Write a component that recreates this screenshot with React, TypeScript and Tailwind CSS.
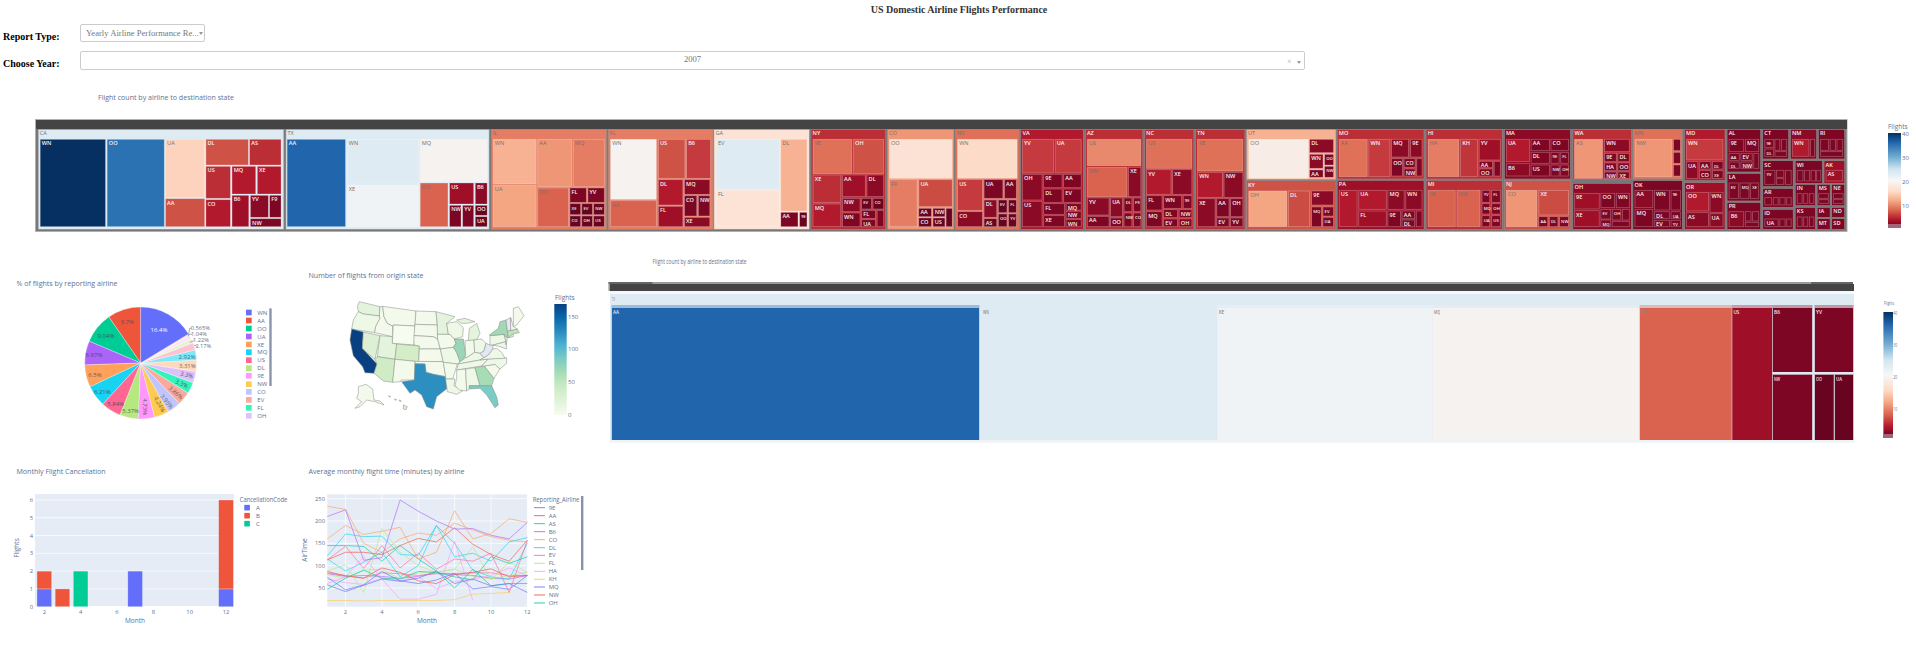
import React from "react";

const FS = '"Open Sans", "Liberation Sans", sans-serif';
const INK = "#5f7190";

const A = "#053061", B = "#2166ac", B2 = "#2b72b3", L = "#deebf3", W = "#f0f3f5", P = "#f6f2ef", K = "#fdd3bd", K2 = "#fce2d4",
  S1 = "#f6b292", S2 = "#f4a582", S3 = "#ef9676", S4 = "#e47d63", S5 = "#df7158", S6 = "#d9634e",
  R1 = "#cf5246", R2 = "#c43a3e", R3 = "#bb2e36", R4 = "#b2192c", R5 = "#a00f28", D1 = "#8b0a25", D2 = "#7c0623", D3 = "#680320";

type Kid = [string, number, number, number, number, string?];
type St = [number, string, number, number, number, number, string, Kid[]];

const states: St[] = [
  [2, "CA", 20, 43, 622, 343, L, [["WN", 25, 73, 185, 335, A], ["OO", 189, 73, 329, 335, B2], ["UA", 332, 73, 428, 247, K], ["AA", 332, 251, 428, 335, R1], ["DL", 431, 73, 535, 150, R1], ["AS", 538, 73, 615, 150, R3], ["US", 431, 154, 491, 250, R3], ["MQ", 495, 154, 553, 237, R4], ["XE", 557, 154, 615, 237, R4], ["CO", 431, 254, 491, 335, R4], ["B6", 495, 241, 536, 335, R5], ["YV", 540, 241, 584, 307, D1], ["F9", 587, 241, 615, 307, D2], ["NW", 540, 311, 615, 335, D2]]],
  [2, "TX", 627, 43, 1125, 343, L, [["AA", 630, 73, 773, 335, B], ["WN", 777, 73, 952, 207, L], ["XE", 777, 211, 952, 335, W], ["MQ", 956, 73, 1120, 200, P], ["OO", 956, 204, 1024, 335, S6], ["US", 1028, 204, 1087, 267, R5], ["B6", 1091, 204, 1120, 267, D1], ["NW", 1028, 271, 1056, 335, D2], ["YV", 1060, 271, 1087, 335, D2], ["OO", 1091, 271, 1120, 301, D3], ["UA", 1091, 305, 1120, 335, D3]]],
  [2, "IL", 1130, 43, 1413, 343, S4, [["WN", 1135, 73, 1240, 207, S1], ["UA", 1135, 211, 1240, 335, S2], ["AA", 1244, 73, 1327, 215, S3], ["MQ", 1331, 73, 1407, 215, S4], ["OO", 1244, 219, 1319, 335, S6], ["FL", 1323, 219, 1363, 262, D2], ["YV", 1367, 219, 1407, 262, D2], ["XE", 1323, 266, 1349, 299, D3], ["EV", 1352, 266, 1378, 299, D3], ["NW", 1381, 266, 1407, 299, D3], ["CO", 1323, 303, 1349, 335, D3], ["OH", 1352, 303, 1378, 335, D3], ["US", 1381, 303, 1407, 335, D3]]],
  [3, "FL", -127, 43, 130, 343, S4, [["WN", -121, 73, -9, 253, P], ["AA", -121, 257, -9, 335, S6], ["US", -4, 73, 61, 190, R1], ["B6", 65, 73, 124, 190, R2], ["DL", -4, 194, 56, 270, R4], ["MQ", 60, 194, 122, 238, D1], ["CO", 60, 242, 90, 303, D2], ["NW", 94, 242, 122, 303, D2], ["FL", -4, 274, 56, 335, R5], ["XE", 60, 307, 122, 335, D1]]],
  [3, "GA", 132, 43, 366, 343, "#fde3d6", [["EV", 138, 73, 293, 222, L], ["FL", 138, 226, 293, 333, "#fde3d6"], ["DL", 296, 73, 360, 288, S1], ["AA", 296, 292, 338, 335, D2], ["9E", 342, 292, 360, 335, D3]]],
  [3, "NY", 370, 43, 553, 343, R3, [["9E", 375, 73, 470, 176, S5], ["OH", 474, 73, 548, 176, R1], ["XE", 375, 180, 443, 262, R3], ["MQ", 375, 267, 443, 335, R4], ["AA", 447, 180, 503, 245, R5], ["DL", 507, 180, 548, 245, D1], ["NW", 447, 250, 490, 290, D1], ["EV", 494, 250, 518, 282, D3], ["CO", 522, 250, 548, 282, D3], ["WN", 447, 294, 490, 335, D2], ["FL", 494, 286, 528, 310, D2], ["UA", 494, 314, 528, 335, D2], ["US", 532, 286, 548, 335, D2]]],
  [3, "CO", 557, 43, 720, 343, S3, [["OO", 562, 73, 716, 190, K2], ["F9", 562, 194, 630, 335, S4], ["UA", 634, 194, 716, 275, "#cb4c42"], ["AA", 634, 280, 665, 305, D3], ["NW", 669, 280, 698, 305, D3], ["", 701, 280, 716, 335, D3], ["CO", 634, 309, 665, 335, D3], ["US", 669, 309, 698, 335, D3]]],
  [3, "NV", 724, 43, 880, 343, S5, [["WN", 729, 73, 875, 190, "#fcdcc9"], ["US", 729, 194, 790, 286, R2], ["UA", 794, 194, 840, 250, D2], ["AA", 844, 194, 873, 250, D2], ["CO", 729, 290, 790, 335, D1], ["DL", 794, 255, 825, 307, D1], ["EV", 829, 255, 850, 293, D3], ["FL", 854, 255, 873, 293, D3], ["AS", 794, 311, 825, 335, D3], ["OO", 829, 297, 850, 335, D3], ["YV", 854, 297, 873, 335, D3]]],
  [3, "VA", 884, 43, 1037, 343, R4, [["YV", 888, 73, 964, 174, R2], ["UA", 968, 73, 1032, 174, R2], ["OH", 888, 178, 936, 255, D1], ["9E", 940, 178, 985, 218], ["AA", 989, 178, 1032, 218], ["DL", 940, 222, 985, 262], ["EV", 989, 222, 1032, 262], ["US", 888, 259, 936, 335, D1], ["FL", 940, 266, 991, 298], ["MQ", 995, 266, 1032, 285], ["NW", 995, 289, 1032, 310], ["XE", 940, 302, 991, 335], ["WN", 995, 314, 1032, 335]]],
  [3, "AZ", 1042, 43, 1183, 343, R3, [["US", 1047, 73, 1178, 152, "#e8886c"], ["WN", 1047, 157, 1144, 245, S6], ["XE", 1148, 157, 1178, 245, D1], ["YV", 1047, 249, 1100, 300, D1], ["UA", 1104, 249, 1133, 305, D1], ["DL", 1137, 249, 1156, 290], ["F9", 1160, 249, 1178, 290], ["AA", 1047, 304, 1100, 335], ["OO", 1104, 309, 1133, 335], ["NW", 1137, 294, 1156, 335], ["CO", 1160, 294, 1178, 335]]],
  [3, "NC", 1187, 43, 1308, 343, R3, [["US", 1192, 73, 1303, 160, S5], ["YV", 1192, 164, 1252, 238, R4], ["XE", 1256, 164, 1303, 238, D1], ["FL", 1192, 242, 1230, 285], ["WN", 1234, 242, 1278, 280], ["9E", 1282, 242, 1303, 280], ["MQ", 1192, 290, 1230, 335], ["DL", 1234, 284, 1268, 308], ["NW", 1272, 284, 1303, 308], ["EV", 1234, 312, 1268, 335], ["OH", 1272, 312, 1303, 335]]],
  [3, "TN", 1312, 43, 1433, 343, R3, [["9E", 1317, 73, 1428, 168, S5], ["WN", 1317, 172, 1378, 247, R4], ["NW", 1382, 172, 1428, 247, D1], ["XE", 1317, 251, 1360, 335, D1], ["AA", 1364, 251, 1394, 305], ["OH", 1398, 251, 1428, 305], ["EV", 1364, 309, 1394, 335], ["YV", 1398, 309, 1428, 335]]],
  [4, "UT", -83, 43, 138, 194, S1, [["OO", -77, 73, 70, 190, "#f7ece6"], ["DL", 73, 73, 132, 113, D1], ["WN", 73, 118, 106, 160, D1], ["OO", 110, 118, 132, 150], ["AA", 73, 165, 106, 187], ["NW", 110, 154, 132, 187]]],
  [4, "KY", -83, 197, 138, 343, R1, [["OH", -77, 228, 17, 335, S2], ["DL", 21, 228, 73, 335, "#cb4c42"], ["9E", 78, 228, 132, 270, D1], ["MQ", 78, 276, 102, 335], ["EV", 106, 276, 132, 303], ["UA", 106, 307, 132, 335]]],
  [4, "MO", 141, 43, 355, 192, R3, [["AA", 146, 73, 215, 185, S5], ["WN", 219, 73, 271, 185, R2], ["MQ", 275, 73, 317, 126, D1], ["9E", 322, 73, 350, 126, D1], ["OO", 275, 131, 302, 183], ["CO", 306, 131, 333, 157], ["NW", 306, 162, 333, 183], ["", 337, 131, 350, 183]]],
  [4, "PA", 141, 196, 355, 343, R5, [["US", 146, 226, 190, 335, R4], ["UA", 194, 226, 262, 283, R4], ["MQ", 266, 226, 306, 283, D1], ["WN", 310, 226, 350, 283, D1], ["FL", 194, 288, 262, 335, R5], ["9E", 266, 288, 297, 335], ["AA", 301, 288, 332, 311], ["DL", 301, 315, 332, 335], ["", 336, 288, 350, 335]]],
  [4, "HI", 360, 43, 548, 192, R3, [["HA", 365, 73, 441, 185, S4], ["KH", 445, 73, 487, 185, "#bf3539"], ["YV", 491, 73, 543, 135, R5], ["AA", 491, 139, 524, 158], ["OO", 491, 162, 524, 183], ["", 528, 139, 543, 183]]],
  [4, "MI", 360, 196, 548, 343, R3, [["9E", 365, 226, 432, 335, S6], ["NW", 436, 226, 493, 335, S6], ["YV", 498, 226, 517, 262], ["FL", 522, 226, 543, 262], ["MQ", 498, 266, 517, 297], ["OH", 522, 266, 543, 297], ["UA", 498, 302, 517, 335], ["US", 522, 302, 543, 335]]],
  [4, "MA", 553, 43, 716, 192, D1, [["UA", 558, 73, 615, 140, R4], ["AA", 619, 73, 664, 107], ["CO", 668, 73, 711, 107], ["DL", 619, 112, 664, 145], ["9E", 668, 112, 688, 145], ["FL", 692, 112, 711, 145], ["B6", 558, 146, 615, 183, D1], ["US", 619, 150, 664, 183], ["NW", 668, 150, 688, 183], ["OH", 692, 150, 711, 183]]],
  [4, "NJ", 553, 196, 717, 343, R1, [["CO", 558, 226, 633, 335, S3], ["XE", 638, 226, 711, 300, "#cb4c42"], ["AA", 638, 305, 660, 335], ["DL", 664, 305, 685, 335], ["NW", 689, 305, 711, 335]]],
  [4, "WA", 722, 43, 866, 192, R3, [["AS", 726, 73, 795, 190, S3], ["WN", 800, 73, 861, 110, D1], ["9E", 800, 115, 829, 140], ["DL", 833, 115, 861, 140], ["HA", 800, 144, 829, 167], ["OO", 833, 144, 861, 167], ["NW", 800, 171, 829, 190], ["XE", 833, 171, 861, 190]]],
  [4, "OH", 722, 205, 866, 343, D1, [["9E", 726, 235, 787, 282, R5], ["OO", 791, 235, 825, 278], ["WN", 829, 235, 861, 278], ["XE", 726, 287, 787, 335, R5], ["EV", 791, 283, 815, 312], ["OH", 819, 283, 840, 315], ["US", 844, 283, 861, 315], ["MQ", 791, 315, 815, 335], ["", 819, 319, 861, 335]]],
  [4, "MN", 870, 43, 992, 192, S5, [["NW", 875, 73, 966, 185, S3], ["9E", 970, 73, 987, 107], ["FL", 970, 112, 987, 145], ["UA", 970, 150, 987, 183]]],
  [4, "OK", 870, 197, 992, 343, D2, [["AA", 875, 226, 919, 278, D1], ["WN", 923, 226, 960, 285], ["9E", 964, 226, 987, 285], ["MQ", 875, 283, 919, 335], ["DL", 923, 290, 960, 311], ["UA", 964, 290, 987, 311], ["EV", 923, 316, 960, 335], ["YV", 964, 316, 987, 335]]],
  [4, "MD", 997, 43, 1097, 197, R4, [["WN", 1002, 73, 1092, 135, R2], ["UA", 1002, 140, 1030, 190, D1], ["AA", 1034, 140, 1062, 162], ["DL", 1066, 140, 1092, 162], ["CO", 1034, 167, 1062, 190], ["XE", 1066, 167, 1092, 190]]],
  [4, "OR", 997, 203, 1097, 343, R5, [["OO", 1002, 232, 1056, 288, R4], ["WN", 1060, 232, 1092, 292, D1], ["AS", 1002, 293, 1056, 335, D1], ["UA", 1060, 296, 1092, 335, D1]]],
  [4, "AL", 1102, 43, 1185, 171, D2, [["9E", 1107, 73, 1143, 110], ["MQ", 1147, 73, 1180, 110], ["AA", 1107, 115, 1132, 136], ["EV", 1136, 115, 1164, 136], ["", 1168, 115, 1180, 160], ["DL", 1107, 141, 1132, 160], ["NW", 1136, 141, 1164, 160]]],
  [4, "LA", 1102, 175, 1185, 258, D2, [["EV", 1107, 204, 1130, 250], ["MQ", 1134, 204, 1156, 250], ["XE", 1160, 204, 1180, 250]]],
  [4, "PR", 1102, 262, 1185, 343, D2, [["B6", 1107, 290, 1143, 335, D1], ["", 1147, 290, 1161, 318], ["", 1165, 290, 1180, 318], ["", 1147, 322, 1180, 335]]],
  [4, "CT", 1190, 43, 1254, 132, D2, [["9E", 1195, 73, 1217, 98], ["DL", 1195, 102, 1217, 124], ["", 1220, 73, 1232, 106], ["", 1236, 73, 1249, 106], ["", 1220, 110, 1249, 124]]],
  [4, "SC", 1190, 137, 1265, 215, D2, [["YV", 1195, 166, 1220, 208], ["", 1224, 166, 1242, 187], ["", 1246, 166, 1260, 208], ["", 1224, 191, 1242, 208]]],
  [4, "AR", 1190, 220, 1265, 277, D2, [["", 1195, 248, 1212, 270], ["", 1216, 248, 1228, 270], ["", 1232, 248, 1245, 270], ["", 1249, 248, 1260, 270]]],
  [4, "ID", 1190, 283, 1265, 343, D2, [["UA", 1195, 312, 1228, 335], ["", 1232, 312, 1245, 335], ["", 1249, 312, 1260, 335]]],
  [4, "NM", 1258, 43, 1323, 132, D1, [["WN", 1263, 73, 1304, 124, R4], ["", 1308, 73, 1318, 124]]],
  [4, "RI", 1327, 43, 1392, 132, D2, [["", 1332, 73, 1352, 106], ["", 1356, 73, 1369, 106], ["", 1373, 73, 1387, 106], ["", 1332, 110, 1387, 124]]],
  [4, "WI", 1270, 137, 1337, 205, D2, [["", 1275, 166, 1289, 198], ["", 1293, 166, 1305, 198], ["", 1309, 166, 1320, 198], ["", 1323, 166, 1333, 198]]],
  [4, "AK", 1341, 137, 1392, 205, R5, [["AS", 1346, 166, 1387, 198, R5]]],
  [4, "IN", 1270, 208, 1320, 272, D2, [["", 1275, 236, 1287, 265], ["", 1291, 236, 1301, 265], ["", 1305, 236, 1316, 265]]],
  [4, "MS", 1324, 208, 1356, 272, D2, [["", 1328, 236, 1352, 250], ["", 1328, 254, 1352, 265]]],
  [4, "NE", 1360, 208, 1392, 272, D2, [["", 1364, 236, 1388, 250], ["", 1364, 254, 1388, 265]]],
  [4, "KS", 1270, 277, 1320, 343, D2, [["", 1275, 306, 1287, 335], ["", 1291, 306, 1301, 335], ["", 1305, 306, 1316, 335]]],
  [4, "IA", 1324, 277, 1356, 307, D2, []],
  [4, "ND", 1360, 277, 1392, 307, D2, []],
  [4, "MT", 1324, 311, 1356, 343, D2, []],
  [4, "SD", 1360, 311, 1392, 343, D2, []],
];

const mapX = (z: number, v: number) => (z === 2 ? 30 + v / 2.45 : z === 3 ? 660 + v / 2.45 : 1280 + v / 2.465);
const mapY = (v: number) => 115 + v / 3;

function isLight(c: string) {
  const r = parseInt(c.slice(1, 3), 16), g = parseInt(c.slice(3, 5), 16), b = parseInt(c.slice(5, 7), 16);
  return 0.3 * r + 0.59 * g + 0.11 * b > 125;
}

function Tile({ x0, y0, x1, y1, fill, label, stroke, sw = 0.8, fs = 5.6 }: { x0: number; y0: number; x1: number; y1: number; fill: string; label: string; stroke: string; sw?: number; fs?: number }) {
  return (
    <g>
      <rect x={x0} y={y0} width={x1 - x0} height={y1 - y0} fill={fill} stroke={stroke} strokeWidth={sw} />
      {label && (
        <text x={x0 + 1.6} y={y0 + 6} fontSize={fs} fontFamily={FS} fontWeight={isLight(fill) ? 400 : 600} fill={isLight(fill) ? "#77706c" : "#f5f0f0"}>
          {label}
        </text>
      )}
    </g>
  );
}

function BigTreemap() {
  return (
    <svg viewBox="0 85 1916 165" className="block w-[1916px] h-[165px]">
      <text x={98} y={99.5} fontSize={7} fontFamily={FS} fill={INK} textLength={136} lengthAdjust="spacingAndGlyphs">Flight count by airline to destination state</text>
      <rect x={35.5} y={119.5} width={1811.5} height={112} fill="#777777" stroke="#b0b0b0" strokeWidth={1} />
      <rect x={36} y={120} width={1811} height={9} fill="#444444" />
      {states.map(([z, l, a, b, c, d, col, kids]) => (
        <g key={l}>
          <Tile x0={mapX(z, a)} y0={mapY(b)} x1={mapX(z, c)} y1={mapY(d)} fill={col} label={l} stroke="#8f8f8f" sw={0.6} />
          {kids.map(([kl, p, q, r, s, kc], i) => {
            const wpx = (r - p) / 2.45;
            return (
              <Tile key={i} x0={mapX(z, p)} y0={mapY(q)} x1={mapX(z, r)} y1={mapY(s)} fill={kc ?? D2} label={wpx > 7 ? kl : ""} fs={wpx < 11 ? 4.2 : 5.6} stroke="rgba(255,255,255,0.3)" />
            );
          })}
        </g>
      ))}
      <ColorBar x={1888} y={133} w={13} h={95} />
      <text x={1888} y={129} fontSize={6.5} fontFamily={FS} fill={INK}>Flights</text>
      {[["40", 136], ["30", 160], ["20", 184], ["10", 208]].map(([t, y]) => (
        <text key={t} x={1902} y={Number(y)} fontSize={6} fontFamily={FS} fill={INK}>{t}</text>
      ))}
    </svg>
  );
}

function ColorBar({ x, y, w, h }: { x: number; y: number; w: number; h: number }) {
  const id = `rb${Math.round(x)}`;
  return (
    <g>
      <defs>
        <linearGradient id={id} x1="0" y1="0" x2="0" y2="1">
          <stop offset="0" stopColor="#053061" />
          <stop offset="0.1" stopColor="#2166ac" />
          <stop offset="0.25" stopColor="#6fabd0" />
          <stop offset="0.38" stopColor="#d1e5f0" />
          <stop offset="0.5" stopColor="#f7f7f7" />
          <stop offset="0.62" stopColor="#fddbc7" />
          <stop offset="0.72" stopColor="#f4a582" />
          <stop offset="0.82" stopColor="#d6604d" />
          <stop offset="0.91" stopColor="#b2182b" />
          <stop offset="0.97" stopColor="#7c0623" />
          <stop offset="1" stopColor="#67001f" />
        </linearGradient>
      </defs>
      <rect x={x} y={y} width={w} height={h} fill={`url(#${id})`} />
      <rect x={x} y={y + h - 4} width={w} height={4} fill="#a0667a" />
    </g>
  );
}

const pieCols: [string, number, string][] = [
  ["AA", 9.7, "#ef553b"], ["OO", 9.04, "#00cc96"], ["UA", 6.97, "#ab63fa"], ["XE", 6.5, "#ffa15a"], ["MQ", 6.21, "#19d3f3"], ["US", 5.84, "#ff6692"], ["DL", 5.37, "#b6e880"], ["9E", 4.73, "#ff97ff"], ["NW", 4.24, "#fecb52"], ["CO", 3.95, "#c1c5fd"], ["EV", 3.86, "#f9aa9d"], ["FL", 3.3, "#33f5bc"], ["OH", 3.3, "#ddc1fd"], ["", 3.31, "#ffd9bd"], ["", 2.92, "#7de9f8"], ["", 2.17, "#ffc2d3"], ["", 1.22, "#e2f5cf"], ["", 1.04, "#ffe0ff"], ["", 0.565, "#ffeaba"], ["WN", 16.4, "#636efa"],
];

function Pie() {
  const cx = 140.7, cy = 363, r = 56;
  const tot = pieCols.reduce((s, p) => s + p[1], 0);
  let ang = 0;
  const paths = pieCols.map(([n, v, c]) => {
    const a0 = ang;
    const a1 = ang - (v / tot) * Math.PI * 2;
    ang = a1;
    const x0 = cx + r * Math.sin(a0), y0 = cy - r * Math.cos(a0), x1 = cx + r * Math.sin(a1), y1 = cy - r * Math.cos(a1);
    const big = a0 - a1 > Math.PI ? 1 : 0;
    return <path key={n + v} d={`M${cx} ${cy}L${x0} ${y0}A${r} ${r} 0 ${big} 0 ${x1} ${y1}Z`} fill={c} stroke="#fff" strokeWidth={0.3} />;
  });
  const labels: [string, number, number, number, string][] = [
    ["16.4%", 477, 195, 0, "#fff"], ["9.7%", 382, 171, 0, "#6a4a50"], ["9.04%", 318, 213, 0, "#35635c"], ["6.97%", 282, 270, 0, "#54477a"], ["6.5%", 285, 330, 0, "#6a5a50"], ["6.21%", 307, 380, 0, "#38606e"], ["5.84%", 347, 416, 0, "#6a4a60"], ["5.37%", 392, 438, 0, "#5a6a50"], ["4.73%", 435, 425, 90, "#665a70"], ["4.24%", 478, 418, 60, "#665f50"], ["3.95%", 500, 410, 50, "#5f6480"], ["3.86%", 527, 383, 40, "#70605c"], ["3.3%", 545, 357, 25, "#4c6a64"], ["3.3%", 560, 330, 15, "#665f7a"], ["3.31%", 562, 302, 0, "#706a60"], ["2.92%", 561, 277, 0, "#4c6a74"],
  ];
  const out: [string, number, number][] = [["0.565%", 601, 189], ["1.04%", 597, 207], ["1.22%", 603, 226], ["2.17%", 610, 243]];
  const legend = ["WN", "AA", "OO", "UA", "XE", "MQ", "US", "DL", "9E", "NW", "CO", "EV", "FL", "OH"];
  const legCols = ["#636efa", "#ef553b", "#00cc96", "#ab63fa", "#ffa15a", "#19d3f3", "#ff6692", "#b6e880", "#ff97ff", "#fecb52", "#c1c5fd", "#f9aa9d", "#33f5bc", "#ddc1fd"];
  const ys = [143, 167, 191, 215, 239, 262, 286, 310, 333, 358, 381, 405, 429, 453];
  return (
    <svg viewBox="0 250 300 210" className="block w-[300px] h-[210px]">
      <text x={16.5} y={286} fontSize={7.2} fontFamily={FS} fill={INK} textLength={101} lengthAdjust="spacingAndGlyphs">% of flights by reporting airline</text>
      {paths}
      <g transform="translate(0 265) scale(0.33333)" fontFamily={FS}>
        {labels.map(([t, x, y, rot, c]) => (
          <text key={t + x} x={x} y={y + 6} fontSize={18} textAnchor="middle" fill={c} transform={rot ? `rotate(${rot} ${x} ${y})` : undefined}>{t}</text>
        ))}
        <path d="M565 214L569 190H574M565 209L571 208H576M570 232L582 227M582 240L590 243" fill="none" stroke="#8d93a5" strokeWidth={2.4} />
        {out.map(([t, x, y]) => (
          <text key={t} x={x} y={y + 6} fontSize={17} textAnchor="middle" fill={INK}>{t}</text>
        ))}
        {legend.map((n, i) => (
          <g key={n}>
            <rect x={738} y={ys[i] - 9} width={17} height={17} fill={legCols[i]} />
            <text x={772} y={ys[i] + 6} fontSize={18} fill={INK}>{n}</text>
          </g>
        ))}
        <rect x={808} y={130} width={7} height={233} fill="#8892ab" />
      </g>
    </svg>
  );
}

const G0 = "#f3faec", G1 = "#eef8e6", G2 = "#e4f4dc", G3 = "#dcf1d4";
const mapStates: [string, string][] = [
  ["M178 110L240 125L238 153L190 147L175 140L172 125Z", G2],
  ["M175 140L190 147L238 153L240 160L227 185L224 203L155 192L160 165Z", G1],
  ["M155 192L190 201L187 250L231 297L222 325L195 323L188 305L160 272L150 225Z", "#084081"],
  ["M190 201L240 212L225 283L221 280L187 250Z", G3],
  ["M248 124L252 155L262 175L278 183L277 215L224 203L227 185L240 160L238 153L240 125Z", G0],
  ["M248 124L348 138L345 183L280 180L278 183L262 175L252 155Z", G0],
  ["M280 180L345 183L342 240L277 235Z", "#f7fcf0"],
  ["M240 212L277 215L277 235L290 237L285 283L232 275Z", G2],
  ["M232 275L285 283L278 352L250 348L222 325L231 297L225 283Z", "#cfecc4"],
  ["M290 237L358 243L356 290L285 283Z", "#d4edc6"],
  ["M285 283L345 289L343 345L303 345L302 350L278 352Z", G0],
  ["M348 138L408 140L412 180L345 178Z", G0],
  ["M345 178L412 180L413 222L400 215L342 212Z", G0],
  ["M342 212L400 215L413 222L421 252L358 252L358 243L342 240Z", G0],
  ["M358 252L421 252L430 290L356 290Z", G0],
  ["M345 289L430 290L437 335L400 328L378 322L375 297L345 296Z", G0],
  ["M345 296L375 297L378 322L400 328L437 335L442 370L410 395L400 432L380 425L365 390L345 375L330 385L305 350L343 345Z", "#2d8fbf"],
  ["M408 140L465 155L440 175L445 208L412 208L412 180Z", G2],
  ["M412 208L450 208L463 222L468 235L460 247L421 252L413 222Z", G0],
  ["M421 252L460 247L470 262L480 290L472 297L430 292Z", G1],
  ["M430 292L472 297L458 342L437 342L437 335Z", G0],
  ["M437 342L465 342L462 362L488 378L470 388L442 380Z", G1],
  ["M440 175L470 170L490 188L488 215L463 222L450 208L445 208Z", G1],
  ["M463 222L490 222L497 270L485 290L480 290L470 262L460 247L468 235Z", "#9ad5b8"],
  ["M508 190L530 175L540 205L530 225L505 227Z", G2],
  ["M470 165L495 160L525 170L500 175L485 175Z", G2],
  ["M495 227L522 225L524 262L505 275L495 280L497 270Z", G0],
  ["M522 225L545 222L558 235L552 258L540 265L524 262Z", G1],
  ["M480 290L495 280L505 275L524 262L540 265L552 278L540 285L475 297Z", G1],
  ["M475 297L540 285L565 282L545 303L470 315Z", G1],
  ["M470 315L497 312L500 378L478 375L465 362L470 340Z", G0],
  ["M497 312L525 308L540 362L508 362L508 372L500 378Z", G1],
  ["M525 308L553 303L582 340L575 362L540 362Z", "#a8dcb5"],
  ["M508 362L540 362L575 362L590 395L595 420L585 428L560 390L540 370L510 372L508 372Z", "#7bccc4"],
  ["M553 303L585 298L600 312L582 340Z", G0],
  ["M545 303L565 282L620 278L620 295L600 312L585 298L553 303Z", G1],
  ["M540 285L552 278L565 270L578 252L590 250L605 262L615 280L565 282Z", G1],
  ["M552 258L558 235L570 240L580 240L578 252L565 270L552 278L540 265Z", "#e4e7f4"],
  ["M570 212L612 208L618 230L580 240L570 240Z", G1],
  ["M568 210L595 190L600 170L618 165L622 198L625 218L615 215L612 208L570 212Z", "#a2d9b4"],
  ["M580 240L618 230L620 252L600 245Z", G1],
  ["M612 208L622 220L618 240L618 230Z", G2],
  ["M625 210L640 206L640 215L627 218Z", G2],
  ["M622 198L652 192L658 203L640 206L625 218Z", "#bce4bd"],
  ["M618 165L632 158L632 196L622 198Z", "#e4e7f4"],
  ["M632 158L640 185L652 192L632 196Z", G0],
  ["M640 130L655 125L672 152L650 180L640 185Z", G0],
  ["M175 365L198 358L218 372L222 405L240 408L252 420L225 410L200 405L180 425L165 430L185 410L170 400L175 385Z", G0],
  ["M265 392L272 395L268 396ZM283 402L290 404L286 406ZM297 405L304 408L300 410ZM310 420L322 425L318 434L310 432Z", G3],
];

function UsMap() {
  return (
    <svg viewBox="300 250 300 210" className="block w-[300px] h-[210px]">
      <defs>
        <linearGradient id="gnbu" x1="0" y1="1" x2="0" y2="0">
          <stop offset="0" stopColor="#f7fcf0" />
          <stop offset="0.125" stopColor="#e0f3db" />
          <stop offset="0.25" stopColor="#ccebc5" />
          <stop offset="0.375" stopColor="#a8ddb5" />
          <stop offset="0.5" stopColor="#7bccc4" />
          <stop offset="0.625" stopColor="#4eb3d3" />
          <stop offset="0.75" stopColor="#2b8cbe" />
          <stop offset="0.875" stopColor="#0868ac" />
          <stop offset="1" stopColor="#084081" />
        </linearGradient>
      </defs>
      <text x={308.5} y={278} fontSize={7.2} fontFamily={FS} fill={INK} textLength={115} lengthAdjust="spacingAndGlyphs">Number of flights from origin state</text>
      <g transform="translate(300 265) scale(0.33333)">
        {mapStates.map(([d, c], i) => (
          <path key={i} d={d} fill={c} stroke="#8a8f8c" strokeWidth={1.6} strokeLinejoin="round" />
        ))}
      </g>
      <rect x={554.3} y={304} width={12.4} height={111} fill="url(#gnbu)" />
      <text x={555} y={300} fontSize={6.5} fontFamily={FS} fill={INK}>Flights</text>
      {[["150", 319], ["100", 351], ["50", 384], ["0", 417]].map(([t, y]) => (
        <text key={t} x={568} y={Number(y)} fontSize={6} fontFamily={FS} fill={INK}>{t}</text>
      ))}
    </svg>
  );
}

function BarChart() {
  const bx = (m: number) => 44.3 + ((m - 2) * (226 - 44.3)) / 10;
  const by = (v: number) => 606.7 - v * 17.78;
  const bars: [number, number, number, string][] = [
    [2, 0, 1, "#636efa"], [2, 1, 2, "#ef553b"], [3, 0, 1, "#ef553b"], [4, 0, 2, "#00cc96"], [7, 0, 2, "#636efa"], [12, 0, 1, "#636efa"], [12, 1, 6, "#ef553b"],
  ];
  return (
    <svg viewBox="0 460 300 197" className="block w-[300px] h-[197px]">
      <text x={16.5} y={474} fontSize={7.2} fontFamily={FS} fill={INK} textLength={89} lengthAdjust="spacingAndGlyphs">Monthly Flight Cancellation</text>
      <rect x={35} y={494} width={199} height={112.7} fill="#e5ecf6" />
      {[0, 1, 2, 3, 4, 5, 6].map((v) => (
        <g key={v}>
          <line x1={35} x2={234} y1={by(v)} y2={by(v)} stroke="#fff" strokeWidth={v === 0 ? 1 : 0.7} />
          <text x={33} y={by(v) + 2} fontSize={5.8} textAnchor="end" fontFamily={FS} fill={INK}>{v}</text>
        </g>
      ))}
      {[2, 4, 6, 8, 10, 12].map((m) => (
        <g key={m}>
          <text x={bx(m)} y={614} fontSize={5.8} textAnchor="middle" fontFamily={FS} fill={INK}>{m}</text>
        </g>
      ))}
      {bars.map(([m, a, b, c], i) => (
        <rect key={i} x={bx(m) - 7.3} y={by(b)} width={14.6} height={by(a) - by(b)} fill={c} stroke="#e5ecf6" strokeOpacity={0.6} strokeWidth={0.5} />
      ))}
      <text x={135} y={623} fontSize={6.5} textAnchor="middle" fontFamily={FS} fill={INK}>Month</text>
      <text x={21} y={550} fontSize={6.5} textAnchor="middle" fontFamily={FS} fill={INK} transform="rotate(-90 19 550)">Flights</text>
      <text x={239.7} y={502} fontSize={6.5} fontFamily={FS} fill={INK} textLength={47.7} lengthAdjust="spacingAndGlyphs">CancellationCode</text>
      {[["A", "#636efa", 143], ["B", "#ef553b", 167], ["C", "#00cc96", 191]].map(([t, c, y]) => (
        <g key={String(t)}>
          <rect x={244.3} y={460 + Number(y) / 3 - 2.8} width={5.6} height={5.6} fill={String(c)} />
          <text x={256} y={460 + Number(y) / 3 + 2} fontSize={6} fontFamily={FS} fill={INK}>{t}</text>
        </g>
      ))}
    </svg>
  );
}

const series: [string, string, (number | null)[]][] = [
  ["OO", "#ab63fa", [82, 76, 78, 76, 72, 76, 84, 80, 78, 72, 70, 78]],
  ["UA", "#ffa15a", [233, 226, 150, 130, 160, 173, 168, 195, 180, 165, 157, 153]],
  ["US", "#19d3f3", [115, 88, 108, 130, 75, 100, 190, 150, 90, 75, 70, 150]],
  ["WN", "#ff6692", [84, 78, 72, 84, 82, 78, 82, 82, 84, 84, 78, 78]],
  ["XE", "#b6e880", [80, 72, 90, 92, 70, 84, 85, 92, 76, 70, 78, 85]],
  ["YV", "#ff97ff", [70, 62, 58, 72, 66, 76, 48, 65, 70, 78, 95, 78]],
  ["9E", "#636efa", [74, 46, 57, 87, 66, 60, 68, 83, 48, 53, 47, 78]],
  ["AA", "#ef553b", [113, 130, 130, 125, 145, 161, 153, 185, 148, 125, 110, 157]],
  ["AS", "#00cc96", [145, 145, 143, 110, 145, 115, 88, 50, 92, 55, 60, 60]],
  ["B6", "#ab63fa", [210, 225, 112, 118, 247, 222, 200, 182, 183, 168, 160, 197]],
  ["CO", "#ffa15a", [160, 190, 170, 177, 186, 115, 130, 223, 160, 172, 205, 197]],
  ["DL", "#19d3f3", [122, 171, 165, 166, 125, 123, 190, 120, 128, 110, 153, 163]],
  ["EV", "#ff6692", [113, 143, 94, 145, 95, 128, 92, 115, 110, 128, 40, 157]],
  ["FL", "#b6e880", [88, 102, 40, 183, 130, 100, 85, 92, 142, 68, 108, 85]],
  ["HA", "#ff97ff", [60, 75, 120, 70, 25, 25, 36, 155, 22, null, null, null]],
  ["KH", "#fecb52", [22, 22, 21, 22, 22, 22, 22, 24, 36, 38, 40, null]],
  ["MQ", "#636efa", [57, 42, 56, 70, 65, 72, 88, 60, 70, 55, 60, 40]],
  ["NW", "#ef553b", [87, 77, 72, 95, 85, 66, 60, 80, 85, 93, 75, 78]],
  ["OH", "#00cc96", [47, 72, 90, 72, 70, 87, 85, 75, 68, 120, 105, 120]],
];

function LineChart() {
  const lx = (m: number) => 300 + (82 + (m - 1) * 54.55) / 3;
  const ly = (v: number) => 460 + (116 + (250 - v) * 1.34) / 3;
  const legend: [string, string][] = [["9E", "#636efa"], ["AA", "#ef553b"], ["AS", "#00cc96"], ["B6", "#ab63fa"], ["CO", "#ffa15a"], ["DL", "#19d3f3"], ["EV", "#ff6692"], ["FL", "#b6e880"], ["HA", "#ff97ff"], ["KH", "#fecb52"], ["MQ", "#636efa"], ["NW", "#ef553b"], ["OH", "#00cc96"]];
  const lys = [143, 167, 191, 215, 239, 263, 286, 310, 334, 358, 381, 405, 429];
  return (
    <svg viewBox="300 460 300 197" className="block w-[300px] h-[197px]">
      <text x={308.5} y={474} fontSize={7.2} fontFamily={FS} fill={INK} textLength={156} lengthAdjust="spacingAndGlyphs">Average monthly flight time (minutes) by airline</text>
      <rect x={327.3} y={494.3} width={200} height={112.4} fill="#e5ecf6" />
      {[50, 100, 150, 200, 250].map((v) => (
        <g key={v}>
          <line x1={327.3} x2={527.3} y1={ly(v)} y2={ly(v)} stroke="#fff" strokeWidth={0.7} />
          <text x={325} y={ly(v) + 2} fontSize={5.8} textAnchor="end" fontFamily={FS} fill={INK}>{v}</text>
        </g>
      ))}
      {[2, 4, 6, 8, 10, 12].map((m) => (
        <g key={m}>
          <line x1={lx(m)} x2={lx(m)} y1={494.3} y2={606.7} stroke="#fff" strokeWidth={0.7} />
          <text x={lx(m)} y={614} fontSize={5.8} textAnchor="middle" fontFamily={FS} fill={INK}>{m}</text>
        </g>
      ))}
      {series.map(([n, c, vals]) => (
        <polyline key={n} points={vals.map((v, i) => (v === null ? "" : `${lx(i + 1)},${ly(v)}`)).join(" ")} fill="none" stroke={c} strokeWidth={0.8} strokeOpacity={0.8} />
      ))}
      <text x={427} y={623} fontSize={6.5} textAnchor="middle" fontFamily={FS} fill={INK}>Month</text>
      <text x={305} y={552} fontSize={6.5} textAnchor="middle" fontFamily={FS} fill={INK} transform="rotate(-90 305 550)">AirTime</text>
      <text x={532.7} y={502} fontSize={6.5} fontFamily={FS} fill={INK} textLength={46.7} lengthAdjust="spacingAndGlyphs">Reporting_Airline</text>
      {legend.map(([t, c], i) => (
        <g key={t}>
          <line x1={534} x2={545} y1={460 + lys[i] / 3} y2={460 + lys[i] / 3} stroke={c} strokeWidth={1} strokeOpacity={0.85} />
          <text x={548.7} y={460 + lys[i] / 3 + 2} fontSize={6} fontFamily={FS} fill={INK}>{t}</text>
        </g>
      ))}
      <rect x={581} y={496} width={2.4} height={74} fill="#8892ab" />
    </svg>
  );
}

function WideTreemap() {
  const cols: [string, number, number, number, number, string][] = [
    ["AA", 612, 308, 979, 440, B], ["WN", 982, 308, 1216.6, 440, L], ["XE", 1217.4, 308, 1432.4, 440, W], ["MQ", 1433, 308, 1639, 440, P], ["OO", 1640, 308, 1731.5, 440, S6], ["US", 1732.4, 308, 1772, 440, R5], ["B6", 1773, 308, 1812, 372, D2], ["YV", 1815, 308, 1853, 372, D2], ["NW", 1773, 375, 1812, 440, D2], ["OO", 1815, 375, 1833.6, 440, D3], ["UA", 1835, 375, 1853, 440, D3],
  ];
  return (
    <svg viewBox="600 250 1316 210" className="block w-[1316px] h-[210px]">
      <text x={652.6} y={264} fontSize={7} fontFamily={FS} fill={INK} textLength={94} lengthAdjust="spacingAndGlyphs">Flight count by airline to destination state</text>
      <rect x={652} y={282} width={1160} height={2} fill="#999999" />
      <rect x={608.4} y={282} width={44} height={2} fill="#666666" />
      <rect x={1811} y={282} width={42} height={2} fill="#666666" />
      <rect x={610} y={284} width={1244} height={7} fill="#444444" />
      <rect x={608.4} y={284} width={1.6} height={7} fill="#999999" />
      <rect x={610} y={291} width={1244} height={3} fill="#f4f8fb" />
      <rect x={610} y={294} width={1244} height={148.7} fill="#eef4f8" />
      <rect x={610} y={294} width={1244} height={146} fill={L} />
      <text x={612} y={300.5} fontSize={5.5} fontFamily={FS} fill="#8a8a90" textLength={3} lengthAdjust="spacingAndGlyphs">TX</text>
      {cols.map(([t, a, b, c, d, col], i) => (
        <g key={i}>
          <rect x={a - 0.5} y={b - (i > 5 && b > 340 ? 1 : 3)} width={c - a + 1} height={d - b + (i > 5 && b > 340 ? 1 : 3)} fill={col} fillOpacity={0.35} />
          <rect x={a} y={b} width={c - a} height={d - b} fill={col} />
          <text x={a + 1} y={b + 6} fontSize={5.5} fontFamily={FS} fontWeight={600} fill={isLight(col) ? "#8a8a90" : "#e9e4ee"} textLength={6} lengthAdjust="spacingAndGlyphs">{t}</text>
        </g>
      ))}
      <ColorBar x={1883.4} y={312} w={9.6} h={126} />
      <text x={1884} y={305} fontSize={6} fontFamily={FS} fill={INK} textLength={10} lengthAdjust="spacingAndGlyphs">Flights</text>
      {[["40", 314.5], ["30", 346.5], ["20", 378.5], ["10", 410.5]].map(([t, y]) => (
        <text key={String(t)} x={1893.2} y={Number(y)} fontSize={5.5} fontFamily={FS} fill={INK} textLength={4} lengthAdjust="spacingAndGlyphs">{t}</text>
      ))}
    </svg>
  );
}

function Caret() {
  return <span className="shrink-0 ml-auto w-0 h-0 border-x-[2.5px] border-x-transparent border-t-[3px] border-t-[#999]" />;
}

export default function App() {
  return (
    <div className="w-[1916px] h-[657px] bg-white overflow-hidden font-['Liberation_Serif',serif]">
      <h1 className="h-[24px] pt-[3px] text-center text-[10px] leading-[14px] font-bold text-[#333] pl-[2px]">US Domestic Airline Flights Performance</h1>
      <div className="flex items-start h-[27px]">
        <label className="w-[80px] pl-[3px] pt-[6px] text-[10px] leading-[14px] font-bold text-black">Report Type:</label>
        <div className="w-[125px] h-[18px] flex items-center pl-[5px] pr-[4px] bg-white border border-[#cccccc] rounded-[2px] text-[8.6px] text-[#777] whitespace-nowrap">
          <span>Yearly Airline Performance Re...</span>
          <Caret />
        </div>
      </div>
      <div className="flex items-start h-[34px]">
        <label className="w-[80px] pl-[3px] pt-[6px] text-[10px] leading-[14px] font-bold text-black">Choose Year:</label>
        <div className="relative w-[1225px] h-[19px] flex items-center justify-center bg-white border border-[#cccccc] rounded-[2px] text-[8.6px] text-[#777]">
          <span className="-mt-[3px]">2007</span>
          <div className="absolute right-[3px] top-[6px] flex items-center gap-[3px] w-[14px] text-[8px] leading-[8px] text-[#aaa]">
            <span>×</span>
            <Caret />
          </div>
        </div>
      </div>
      <BigTreemap />
      <div className="flex">
        <div className="grid grid-cols-[300px_300px] w-[600px]">
          <Pie />
          <UsMap />
          <BarChart />
          <LineChart />
        </div>
        <WideTreemap />
      </div>
    </div>
  );
}
